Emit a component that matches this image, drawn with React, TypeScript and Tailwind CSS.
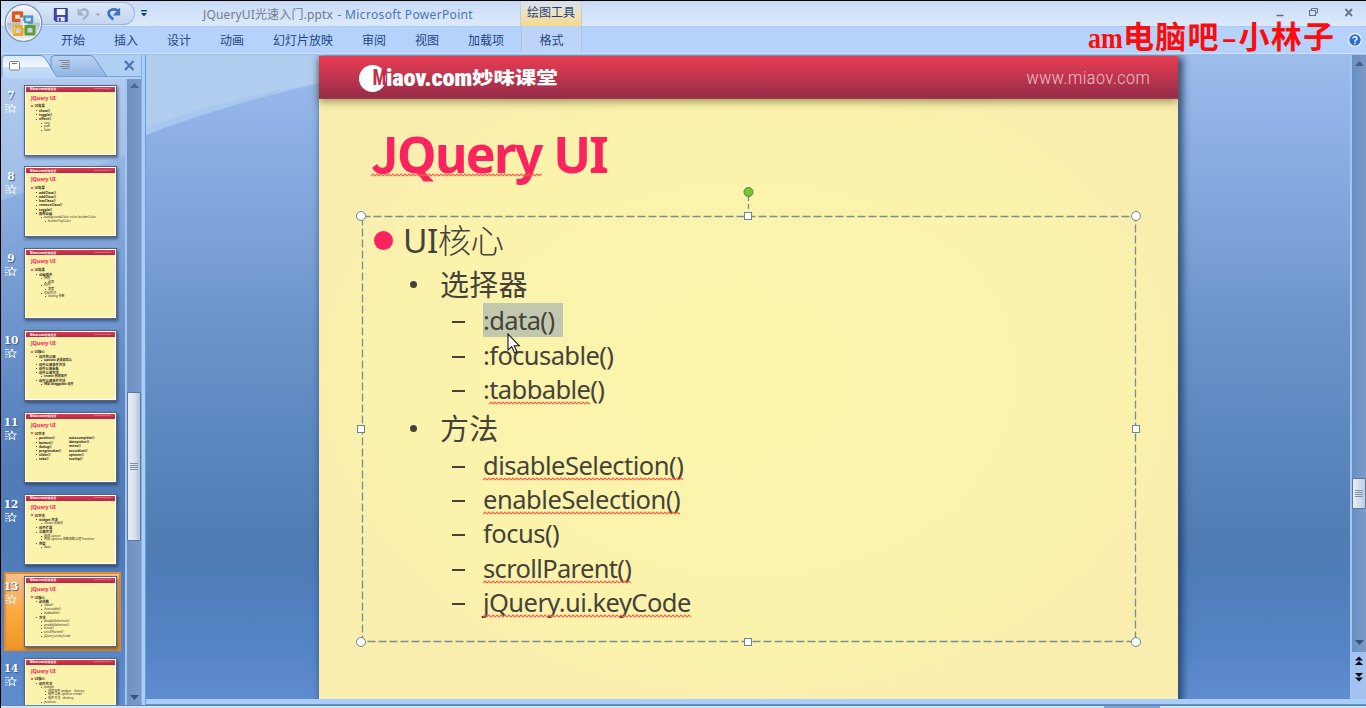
import React from 'react';

const SANS = "font-['Noto_Sans','Noto_Sans_CJK_SC',sans-serif]";

const MENU = ['开始', '插入', '设计', '动画', '幻灯片放映', '审阅', '视图', '加载项'];

function Squiggle({ id, className }: { id: string; className: string }) {
  return (
    <svg className={`absolute left-0 h-[4px] w-full ${className}`} aria-hidden="true">
      <defs>
        <pattern id={id} width="4" height="4" patternUnits="userSpaceOnUse">
          <path d="M0 3 L2 1 L4 3" fill="none" stroke="#f2604a" strokeWidth="1.1" />
        </pattern>
      </defs>
      <rect width="100%" height="4" fill={`url(#${id})`} />
    </svg>
  );
}

function OfficeButton() {
  return (
    <svg className="absolute left-[3px] top-[3px] z-10" width="42" height="42" viewBox="0 0 42 42">
      <defs>
        <linearGradient id="orb" x1="0" y1="0" x2="0" y2="1">
          <stop offset="0" stopColor="#f4f6fa" />
          <stop offset="0.48" stopColor="#d5dce8" />
          <stop offset="0.52" stopColor="#aebdd2" />
          <stop offset="1" stopColor="#f2f7fc" />
        </linearGradient>
      </defs>
      <circle cx="19.500" cy="20" r="18.300" fill="url(#orb)" stroke="#7f94b5" strokeWidth="1.3" />
      <circle cx="19.500" cy="20" r="17.1" fill="none" stroke="#fff" strokeOpacity="0.7" />
      <g fill="none" strokeLinejoin="round" transform="translate(-2.500 -1.500)">
        <path d="M19 19 H12 V11.500 H20 V16" stroke="#dd5a1c" strokeWidth="3.400" />
        <rect x="23" y="15" width="7.500" height="6" stroke="#3e92d0" strokeWidth="2.400" />
        <path d="M23 14.200 H30" stroke="#84c2ea" strokeWidth="1" />
        <rect x="13" y="25" width="7.500" height="8" stroke="#f0a91c" strokeWidth="3" />
        <path d="M13 25 V32.500" stroke="#f8cf52" strokeWidth="1.500" />
        <rect x="24.500" y="25" width="8" height="7.500" stroke="#5c9e32" strokeWidth="3" />
        <path d="M19 22.500 H26 M22 19.500 V26.500" stroke="#eef3fa" strokeWidth="1.300" />
      </g>
    </svg>
  );
}

function QuickAccess() {
  return (
    <div className="flex h-[23px] w-[97px] items-center rounded-r-full border border-l-0 border-[#9db8dd] bg-gradient-to-b from-[#dce8f8] to-[#c2d6f0]">
      <svg width="97" height="22" viewBox="0 0 97 22">
        <path d="M16.500 5.500 H29.500 V18.500 H18 L16.500 17 Z" fill="#4248a8" stroke="#30368c" />
        <rect x="19" y="6" width="8.500" height="6" fill="#f2f4fb" />
        <rect x="19.500" y="14" width="7.500" height="4.500" fill="#dfe3f2" />
        <rect x="21" y="15" width="2" height="3.500" fill="#4248a8" />
        <path d="M43 7.500 C49 4.500 52 9 49.500 12.500 L45.500 16.500" fill="none" stroke="#a4b2ca" strokeWidth="2.300" />
        <path d="M40 5 V12.500 H47 Z" fill="#a4b2ca" />
        <path d="M58 10.500 H63 L60.500 13.500 Z" fill="#a9a9ad" />
        <path d="M81 7.500 C74 4 69 9 72.500 13 L76 16.500" fill="none" stroke="#3f72c2" strokeWidth="2.800" />
        <path d="M83 4.500 V12.500 H75.500 Z" fill="#3f72c2" />
      </svg>
    </div>
  );
}

function TitleBar() {
  return (
    <header className="flex h-[26px] shrink-0 items-start border-t border-black bg-gradient-to-b from-[#c6d9f6] via-[#d3e3f9] to-[#dbe9fa]">
      <div className="flex pl-[37px] pt-[1px]">
        <QuickAccess />
      </div>
      <svg className="ml-[6px] mt-[9px]" width="6" height="7">
        <path d="M0 0.700 H6" stroke="#1c3f86" strokeWidth="1.400" />
        <path d="M0 3 H6 L3 6.500 Z" fill="#1c3f86" />
      </svg>
      <div className="ml-[56px] mt-[4px] flex h-[20px] w-[317px] items-center whitespace-pre text-[12px] leading-[20px]">
        <span className="inline-block w-[130px] tracking-[0.15px] text-[#737b8c]">JQueryUI光速入门.pptx</span>
        <span className="ml-[1px] tracking-[0.34px] text-[#4a76b8]"> - Microsoft PowerPoint</span>
      </div>
      <div className="flex h-[25px] w-[62px] items-start justify-center border-x border-[#c3cfdd] bg-gradient-to-b from-[#d3dfee] via-[#eee3bd] to-[#f5d88a] pt-[2px] text-[12px] leading-[20px] text-[#1d417f]">
        绘图工具
      </div>
      <svg className="ml-auto mr-[6px] mt-[5px]" width="84" height="14" fill="none">
        <path d="M0.500 9.500 H7.500" stroke="#5d6a80" strokeWidth="1.500" />
        <path d="M35.500 5 V2.500 H41.500 V7 H40" stroke="#5f7187" />
        <rect x="33.500" y="4.500" width="6" height="5" stroke="#5f7187" />
        <path d="M69.500 3 L76 10 M76 3 L69.500 10" stroke="#66788f" strokeWidth="1.900" />
      </svg>
    </header>
  );
}

function Ribbon() {
  return (
    <nav className="relative flex h-[29px] shrink-0 border-b border-[#9ebde6] bg-[#b5d3fa] pl-[60px] pt-[5px] text-[12px] leading-[20px] text-[#1d4585] shadow-[inset_0_1px_0_#a9c8f0,inset_0_-1px_0_#cfe2fb]">
      <div className="flex gap-[29px]">
        {MENU.map((m) => (
          <span key={m} className="whitespace-nowrap">{m}</span>
        ))}
      </div>
      <div className="absolute left-[520px] top-0 flex h-[26px] w-[61px] justify-center border-x border-[#a9c3e6] bg-[#bcd5f6] pt-[5px]">格式</div>
      <div className="absolute left-[1087px] top-[-6px] flex whitespace-nowrap text-[#fb0d0d] font-['Liberation_Serif','Noto_Sans_CJK_SC',serif] text-[31px] font-bold leading-[36px]">
        <span className="w-[35px] origin-left scale-x-[0.9] text-[29px]">am</span>
        <span className="tracking-[1.200px]">电脑吧</span>
        <span className="w-[17px] origin-left scale-x-150 pl-[1px]">-</span>
        <span className="pl-[2px] tracking-[1.200px]">小林子</span>
      </div>
      <svg className="absolute left-[1347px] top-[7px]" width="14" height="14">
        <circle cx="7" cy="7" r="6.300" fill="#2c6bd0" stroke="#eef5ff" strokeWidth="1.200" />
        <path d="M5 5.600 C5 3 9.200 3.200 9 5.600 C8.800 7 7 7 7 8.700 M7 9.800 V11.200" stroke="#fff" strokeWidth="1.500" fill="none" />
      </svg>
    </nav>
  );
}

type Line = [number, string];
interface Thumb { n: number; lines: Line[]; bold?: boolean }

const THUMBS: Thumb[] = [
  { n: 7, lines: [[1, 'UI效果'], [2, 'show()'], [2, 'toggle()'], [2, 'effect()'], [3, 'size'], [3, 'puff'], [3, 'fade']] },
  { n: 8, lines: [[1, 'UI效果'], [2, 'addClass()'], [2, 'addClass()'], [2, 'hasClass()'], [2, 'removeClass()'], [2, 'toggle()'], [2, '颜色动画'], [3, 'backgroundColor color borderColor'], [4, 'borderTopColor']] },
  { n: 9, lines: [[1, 'UI效果'], [2, '动画插件'], [3, '特效'], [4, '选项'], [3, '时间'], [4, '速度'], [3, '运动形式'], [4, 'easing 参数']] },
  { n: 10, bold: true, lines: [[1, 'UI核心'], [2, '组件的公用'], [3, 'options 选项和默认'], [2, '组件公用事件方法'], [2, '组件公用参数'], [2, '组件公用方法'], [3, 'create 创建事件'], [2, '组件公用事件方法'], [3, '例如 draggable 组件']] },
  { n: 11, lines: [[1, 'UI方法'], [2, 'position()'], [2, 'button()'], [2, 'dialog()'], [2, 'progressbar()'], [2, 'slider()'], [2, 'tabs()']] },
  { n: 12, lines: [[1, 'UI方法'], [2, 'widget 方法'], [3, 'create 初始化'], [2, '组件扩展'], [2, '公用方法'], [3, '选项 option'], [3, '例如 options 参数和默认值 function'], [2, '原型'], [3, 'data']] },
  { n: 13, lines: [[1, 'UI核心'], [2, '选择器'], [3, ':data()'], [3, ':focusable()'], [3, ':tabbable()'], [2, '方法'], [3, 'disableSelection()'], [3, 'enableSelection()'], [3, 'focus()'], [3, 'scrollParent()'], [3, 'jQuery.ui.keyCode']] },
  { n: 14, lines: [[1, 'UI核心'], [2, '组件方法'], [3, 'widget'], [4, '创建组件 widget    factory'], [4, '组件公用 options create'], [4, '组件方法   destroy'], [3, 'position']] },
];

const LEVEL: Record<number, string> = {
  1: 'pl-[3px] h-[5px] text-[3.300px]',
  2: 'pl-[8px] h-[4.200px] text-[3.300px]',
  3: 'pl-[13px] h-[3.800px] text-[3.100px]',
  4: 'pl-[17px] h-[3.600px] text-[3.100px]',
};

function ThumbSlide({ t }: { t: Thumb }) {
  return (
    <div className="h-[71px] w-[93px] shrink-0 border border-[#5d6470] bg-white p-[1px] shadow-[1px_2px_3px_rgba(20,40,80,0.6)]">
      <div className="flex h-full flex-col bg-[#fbf2ac]">
        <div className="flex h-[5px] shrink-0 items-center justify-between whitespace-nowrap bg-gradient-to-b from-[#e03a50] to-[#a82c48] px-[4px] text-[2.800px] leading-[4px] text-white">
          <span className="font-bold">Miaov.com妙味课堂</span>
          <span className="text-[2.200px] opacity-60">www.miaov.com</span>
        </div>
        <div className="mt-[2px] h-[8px] shrink-0 pl-[5px] text-[5.500px] font-bold leading-[8px] tracking-[-0.2px] text-[#f8225c]">JQuery UI</div>
        <div className="relative mt-[2px] pl-[5px]">
          {t.lines.map(([lv, text], i) => (
            <div key={i} className={`flex items-center whitespace-pre leading-none text-[#2c2a18] ${LEVEL[lv]} ${t.bold || lv < 3 ? 'font-bold' : ''}`}>
              {lv === 1 && <i className="-ml-[3px] mr-[1.500px] size-[2px] rounded-full bg-[#f8225c]" />}
              {lv > 1 && <i className="-ml-[3px] mr-[2px] size-[1px] bg-[#57553c]" />}
              {text}
            </div>
          ))}
          {t.n === 11 && (
            <div className="absolute left-[43px] top-[5px] flex flex-col text-[3.300px] font-bold leading-[4.200px] text-[#2c2a18]">
              <span>autocomplete()</span><span>datepicker()</span><span>menu()</span><span>accordion()</span><span>spinner()</span><span>tooltip()</span>
            </div>
          )}
        </div>
      </div>
    </div>
  );
}

function ThumbRow({ t }: { t: Thumb }) {
  const active = t.n === 13;
  return (
    <div
      className={`ml-[3px] flex h-[79px] w-[117px] shrink-0 items-start border-2 pt-[1.600px] ${
        active ? 'border-[#e58a2c] bg-gradient-to-b from-[#f3c08a] via-[#fba93f] to-[#ee9626]' : 'border-transparent'
      }`}
    >
      <div className="-ml-[4px] mr-[4px] flex w-[18px] shrink-0 flex-col items-center">
        <div className="mt-[3px] flex h-[14px] items-center justify-center font-['DejaVu_Serif',serif] text-[10.500px] font-bold leading-[14px] text-white [text-shadow:1px_1px_1px_#31588f]">{t.n}</div>
        <svg className="mt-[1px]" width="12" height="11" viewBox="0 0 12 11" fill="none" stroke="#f4f8ff">
          <path d="M7 0.800 L8.200 4 H11.400 L8.900 6.200 L9.800 9.600 L7 7.700 L4.200 9.600 L5.100 6.200 L2.800 4 H5.800 Z" strokeWidth="1" />
          <path d="M0 1.500 H4 M0 4 H2 M0 6.500 H3.500 M0 9 H2.500" strokeWidth="1" strokeOpacity="0.8" />
        </svg>
      </div>
      <ThumbSlide t={t} />
    </div>
  );
}

function Grip() {
  return (
    <div className="flex flex-col gap-[1px]">
      {[0, 1, 2, 3].map((i) => (
        <i key={i} className="h-px w-[8px] bg-[#8290a5]" />
      ))}
    </div>
  );
}

function SidePanel() {
  return (
    <aside className="flex w-[140px] shrink-0 flex-col overflow-hidden">
      <div className="relative h-[23px] shrink-0 bg-[#b0cff5]">
        <svg width="140" height="23">
          <defs>
            <linearGradient id="tabA" x1="0" y1="0" x2="0" y2="1">
              <stop offset="0" stopColor="#dbe8fa" />
              <stop offset="0.500" stopColor="#f2f7fe" />
              <stop offset="0.550" stopColor="#c7dcf7" />
              <stop offset="1" stopColor="#b9d5f8" />
            </linearGradient>
            <linearGradient id="tabB" x1="0" y1="0" x2="0" y2="1">
              <stop offset="0" stopColor="#b9d2f2" />
              <stop offset="0.500" stopColor="#a6c4eb" />
              <stop offset="1" stopColor="#8fb3e2" />
            </linearGradient>
          </defs>
          <path d="M50 22 V4 Q50 0.500 54 0.500 H89 Q92 0.500 94 4 L106 21.500" fill="url(#tabB)" stroke="#6593cc" />
          <path d="M1 22.500 V4 Q1 0.500 4 0.500 H39 Q42 0.500 44 3 L55 20.500 L57 22.500" fill="url(#tabA)" stroke="#6593cc" />
          <path d="M56 21.500 H140" stroke="#7ca6da" />
          <rect x="8.500" y="6.500" width="10" height="8.500" rx="1" fill="#fbfaf8" stroke="#82828a" />
          <path d="M11 8.500 H16" stroke="#777" />
          <path d="M58 5.500 H69 M61 7.500 H69 M61 9.500 H69 M58 11.500 H69 M61 13.500 H69" stroke="#848b96" />
          <path d="M124 6 L132.500 15 M132.500 6 L124 15" stroke="#4b76ad" strokeWidth="2.200" />
        </svg>
      </div>
      <div className="flex min-h-0 flex-1 border-t border-[#b7d5fb]">
        <div className="flex w-[124px] flex-col gap-[2.850px] overflow-hidden bg-[linear-gradient(160deg,rgba(255,255,255,0.16)_0%,rgba(255,255,255,0.16)_18%,transparent_18.300%),linear-gradient(to_bottom,#a2c0ec_0%,#91b3e4_15%,#779dd3_32%,#6089c3_50%,#527cb7_62%,#4d7cb8_75%,#5886c4_90%,#5f8ccd_100%)] pt-[2px]">
          {THUMBS.map((t) => (
            <ThumbRow key={t.n} t={t} />
          ))}
        </div>
        <div className="flex w-[16px] flex-col items-center border-l-2 border-[#a4c5ee] bg-gradient-to-r from-[#6d92c5] to-[#7b9aca]">
          <svg className="mt-[4px] shrink-0" width="9" height="5"><path d="M0 5 L4.500 0 L9 5 Z" fill="#4b6794" /></svg>
          <div className="mt-[304px] flex h-[149px] w-[14px] shrink-0 items-center justify-center rounded-[1px] border border-[#5f7799] bg-gradient-to-r from-[#e6ebf3] via-[#dde4ee] to-[#b5c4da]"><Grip /></div>
          <svg className="mb-[5px] mt-auto shrink-0" width="9" height="5"><path d="M0 0 L4.500 5 L9 0 Z" fill="#35527f" /></svg>
        </div>
      </div>
    </aside>
  );
}

interface Row { level: 2 | 3; text: string; box: string; wavy?: string; selected?: boolean; lead?: string; tail?: string; spacing?: string }

const ROWS: Row[] = [
  { level: 2, text: '选择器', box: 'h-[39px] pt-[5px]' },
  { level: 3, text: ':data()', box: 'h-[35px]', selected: true, spacing: 'tracking-[-0.6px]' },
  { level: 3, text: ':focusable()', box: 'h-[35px] pt-[1px]', spacing: 'tracking-[-0.6px]' },
  { level: 3, text: 'tabbable', lead: ':', tail: '()', box: 'h-[34px]', wavy: 'w1', spacing: 'tracking-[-0.6px]' },
  { level: 2, text: '方法', box: 'h-[42px] pt-[3px]' },
  { level: 3, text: 'disableSelection()', box: 'h-[34px]', wavy: 'w2', spacing: 'tracking-[-0.5px]' },
  { level: 3, text: 'enableSelection()', box: 'h-[34px]', wavy: 'w3', spacing: 'tracking-[-0.45px]' },
  { level: 3, text: 'focus()', box: 'h-[34px]', spacing: 'tracking-[-0.5px]' },
  { level: 3, text: 'scrollParent()', box: 'h-[35px] pt-[1px]', wavy: 'w4', spacing: 'tracking-[-0.65px]' },
  { level: 3, text: 'jQuery.ui.keyCode', box: 'h-[34px]', wavy: 'w5', spacing: 'tracking-[-0.56px]' },
];

const HANDLES = [
  'left-[-6px] top-[-5px] rounded-full size-[10px]',
  'right-[-5px] top-[-5px] rounded-full size-[10px]',
  'left-[-6px] bottom-[-5px] rounded-full size-[10px]',
  'right-[-5px] bottom-[-5px] rounded-full size-[10px]',
  'left-[382px] top-[-4px] size-[8px]',
  'left-[382px] bottom-[-4px] size-[8px]',
  'left-[-5px] top-[209px] size-[8px]',
  'right-[-4px] top-[209px] size-[8px]',
];

function ContentBox() {
  return (
    <div className="relative ml-[43px] mt-[26px] h-[426px] w-[774px] text-[#45423a]">
      <svg className="absolute left-0 top-0 overflow-visible" width="774" height="426">
        <rect x="0.500" y="0.500" width="773" height="425" fill="none" stroke="#75918f" strokeWidth="1.300" strokeDasharray="8 3" />
        <path d="M386.500 -20 V0" stroke="#75918f" strokeWidth="1.300" strokeDasharray="5 3" />
        <circle cx="386.500" cy="-24" r="4.500" fill="#74c92c" stroke="#5f7f52" />
      </svg>
      {HANDLES.map((h) => (
        <i key={h} className={`absolute border-[1.500px] border-[#6d8792] bg-white ${h}`} />
      ))}
      <div className="flex h-[47px] items-center pl-[12px] pt-[1px]">
        <i className="size-[19px] rounded-full bg-[#fb235e]" />
        <span className="ml-[10px] text-[33.500px] font-light leading-[46px] tracking-[-0.6px]"><span className="font-normal">UI</span>核心</span>
      </div>
      {ROWS.map((r) =>
        r.level === 2 ? (
          <div key={r.text} className={`flex items-center pl-[48px] ${r.box}`}>
            <i className="-mt-[1px] size-[7px] rounded-full bg-[#45423a]" />
            <span className="ml-[23px] text-[29px] leading-[36px] tracking-[0.2px]">{r.text}</span>
          </div>
        ) : (
          <div key={r.text} className={`flex items-center pl-[90px] ${r.box}`}>
            <i className="mt-[4px] h-[2px] w-[13px] bg-[#45423a]" />
            <span className={`ml-[18px] flex h-[34px] items-center whitespace-pre text-[25.500px] leading-[34px] ${r.spacing ?? ''} ${r.selected ? 'w-[80px] bg-[#c2c8ad]' : ''}`}>
              {r.lead}
              <span className="relative">
                {r.text}
                {r.wavy && <Squiggle id={r.wavy} className="bottom-[1.500px]" />}
              </span>
              {r.tail}
            </span>
          </div>
        ),
      )}
      <svg className="absolute left-[145px] top-[117px]" width="14" height="22" viewBox="0 0 14 22">
        <path d="M1 1 V17 L4.700 13.600 L7.500 19.800 L10 18.700 L7.200 12.700 H12.200 Z" fill="#fff" stroke="#111" strokeWidth="1.100" />
      </svg>
    </div>
  );
}

function Slide() {
  return (
    <section className="ml-[173px] mt-[1px] flex h-[643px] w-[859px] flex-col bg-[radial-gradient(ellipse_at_center,#fbf4ab_0%,#fbf3ab_58%,#faeeaf_74%,#f9edaf_100%)] shadow-[3px_3px_7px_2px_rgba(30,55,95,0.75)]">
      <div className="flex h-[43px] shrink-0 items-center border-b border-[#a33c4c] bg-gradient-to-b from-[#e93d52] to-[#962c48] shadow-[0_3px_8px_rgba(90,80,30,0.55)]">
        <div className="ml-[40px] mt-[2px] flex items-center text-white">
          <span className="flex size-[27px] items-center justify-end rounded-full bg-white">
            <span className="origin-right scale-x-[0.7] font-['Roboto',sans-serif] text-[22px] font-black leading-none text-[#c03048]">M</span>
          </span>
          <span className="w-[86px] whitespace-nowrap font-['Roboto_Condensed','Roboto',sans-serif] text-[24.500px] font-black leading-[30px] tracking-[-0.2px]">iaov.com</span>
          <span className="origin-left scale-x-[1.260] text-[17px] font-black leading-[30px]">妙味课堂</span>
        </div>
        <span className="ml-auto mr-[28px] mt-[4px] origin-right scale-x-[0.870] font-['Roboto',sans-serif] text-[18.500px] font-light tracking-[0.6px] text-[#f3c2c9]">www.miaov.com</span>
      </div>
      <h1 className="ml-[52px] mt-[20px] flex h-[70px] items-center whitespace-pre text-[50px] font-bold leading-[70px] tracking-[-1.600px] text-[#fb235e]">
        <span className="relative">
          <span className="font-['Noto_Sans_CJK_SC',sans-serif] text-[48.500px] leading-none">J</span>Query
          <Squiggle id="w0" className="bottom-[12px]" />
        </span>
        <span> UI</span>
      </h1>
      <div className="mt-[1px]">
        <ContentBox />
      </div>
    </section>
  );
}

function VerticalScroll() {
  return (
    <div className="flex w-[16px] shrink-0 flex-col items-center border-l-2 border-[#a4c5ee] bg-gradient-to-r from-[#6790c5] to-[#7c9ac6]">
      <svg className="mt-[6px] shrink-0" width="9" height="5"><path d="M0 5 L4.500 0 L9 5 Z" fill="#4b5f82" /></svg>
      <div className="mt-[412px] flex h-[31px] w-[14px] shrink-0 items-center justify-center rounded-[1px] border border-[#5f7799] bg-gradient-to-r from-[#eceff5] to-[#c0cddf]"><Grip /></div>
      <svg className="mt-[131px] shrink-0" width="9" height="5"><path d="M0 0 L4.500 5 L9 0 Z" fill="#35507c" /></svg>
      <div className="mt-auto flex h-[47px] w-full shrink-0 flex-col items-center bg-[#a3c2ef] pt-[4px]">
        <svg width="8" height="27" fill="#05070c">
          <path d="M0 4.500 L4 0.500 L8 4.500 Z M0 9 L4 5 L8 9 Z M0 17 H8 L4 21 Z M0 21.500 H8 L4 25.500 Z" />
        </svg>
      </div>
    </div>
  );
}

function Stage() {
  return (
    <main className="flex min-w-0 flex-1 flex-col">
      <div className="flex h-[644px] shrink-0">
        <div className="relative flex min-w-0 flex-1 overflow-hidden bg-[linear-gradient(to_bottom,#9dbdec_0%,#8fb1e5_11%,#7da2d8_28%,#6c94ca_42%,#5a85bd_62%,#507bb3_76%,#4f7db8_80%,#5584c6_92%,#608dd0_100%)]">
          <svg className="absolute left-0 top-0" width="173" height="85">
            <path d="M0 0 H173 V28 C110 43 50 60 0 80 Z" fill="#b4cff0" fillOpacity="0.900" />
            <path d="M0 73 C50 54 110 38 173 28 C110 43 50 60 0 80 Z" fill="#a6c5ee" fillOpacity="0.800" />
          </svg>
          <div className="relative flex">
            <Slide />
          </div>
        </div>
        <VerticalScroll />
      </div>
      <div className="h-[6px] shrink-0 border-b border-[#5f8fc8] bg-[#a9cefb]" />
    </main>
  );
}

export default function App() {
  return (
    <div className={`relative flex h-[708px] w-[1366px] flex-col overflow-hidden border-l border-black bg-[#b5d3fa] ${SANS}`}>
      <OfficeButton />
      <TitleBar />
      <Ribbon />
      <div className="flex h-[650px] shrink-0">
        <SidePanel />
        <div className="w-[5px] shrink-0 border-l border-r border-l-[#86aee0] border-r-[#6f9bd2] bg-[#a9cffc]" />
        <Stage />
      </div>
      <footer className="flex h-[3px] shrink-0 border-t border-[#5b86be] bg-[#d3e3f8]">
        <i className="ml-[1103px] h-[2px] w-[56px] bg-[#7f9fc6]" />
      </footer>
    </div>
  );
}
